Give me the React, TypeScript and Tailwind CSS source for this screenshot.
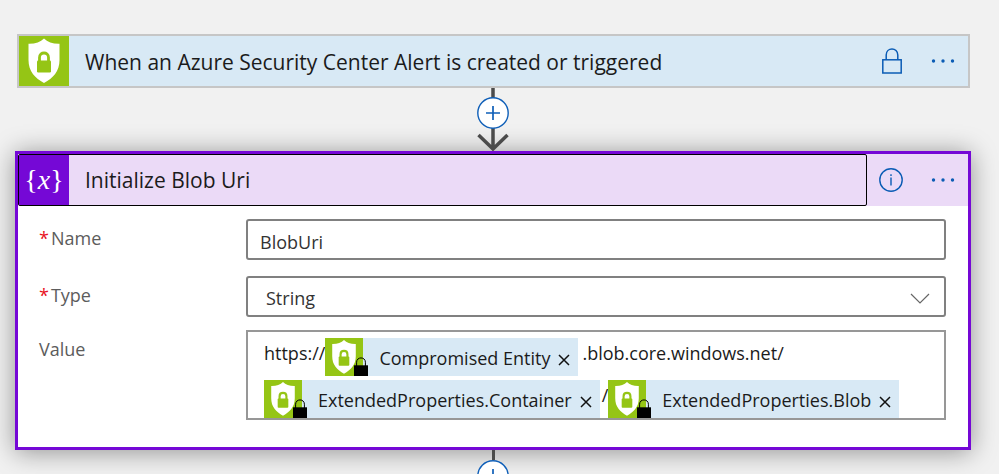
import type { ReactNode } from "react";

function ShieldIcon({ className }: { className: string }) {
  return (
    <svg viewBox="0 0 50 50" className={className} aria-hidden="true">
      <rect width="50" height="50" fill="#95c515" />
      <path
        d="M25 2.500C28.500 6 34 8 40.500 7.800V24C40.500 35.500 34 42 25 47C16 42 9.500 35.500 9.500 24V7.800C16 8 21.500 6 25 2.500Z"
        fill="#fff"
      />
      <path
        d="M20.500 26V21.500C20.500 15.500 29.500 15.500 29.500 21.500V26"
        fill="none"
        stroke="#95c515"
        strokeWidth="2.800"
      />
      <rect x="18" y="24.500" width="14" height="12" rx="1.200" fill="#95c515" />
    </svg>
  );
}

function SmallLock() {
  return (
    <svg viewBox="0 0 14 19" className="absolute bottom-0 left-[29px] h-[19px] w-[14px]" aria-hidden="true">
      <path d="M2.600 9V5.200C2.600-.5 11.400-.5 11.400 5.200V9" fill="none" stroke="#000" strokeWidth="1" />
      <rect y="8.300" width="14" height="10.700" fill="#000" />
    </svg>
  );
}

function MoreButton() {
  return (
    <button type="button" aria-label="More commands" className="grid h-10 w-[50px] shrink-0 place-items-center text-[#0b5cb5]">
      <svg viewBox="0 0 24 4" className="h-1 w-6" fill="currentColor" aria-hidden="true">
        <circle cx="2.500" cy="2" r="1.700" />
        <circle cx="12" cy="2" r="1.700" />
        <circle cx="21.500" cy="2" r="1.700" />
      </svg>
    </button>
  );
}

function AddStep() {
  return (
    <button type="button" aria-label="Insert a new step" className="relative block h-8 w-8">
      <svg viewBox="0 0 32 32" className="h-8 w-8" fill="none" stroke="#0f5fb8" aria-hidden="true">
        <circle cx="16" cy="16" r="15.200" fill="#fff" strokeWidth="1.400" />
        <path d="M16 9V23M9 16H23" strokeWidth="1.700" />
      </svg>
    </button>
  );
}

function Token({ label }: { label: string }) {
  return (
    <span className="relative flex h-[38px] items-center bg-[#d8e9f5]" contentEditable={false}>
      <ShieldIcon className="h-[38px] w-[38px] shrink-0" />
      <SmallLock />
      <span className="pt-[2px] pl-4">{label}</span>
      <button type="button" aria-label={`Remove ${label}`} className="px-2 pt-[5px]">
        <svg viewBox="0 0 12 12" className="h-3 w-3" stroke="#111" strokeWidth="1.500" aria-hidden="true">
          <path d="M1 1L11 11M11 1L1 11" />
        </svg>
      </button>
    </span>
  );
}

function FieldLabel({ id, htmlFor, required, children }: { id?: string; htmlFor?: string; required?: boolean; children: ReactNode }) {
  return (
    <label id={id} htmlFor={htmlFor} className="w-[207px] shrink-0 pt-[5px] text-[#5c5c5c]">
      {required && <span className="mr-[2px] text-[#e81123]">*</span>}
      {children}
    </label>
  );
}

export default function App() {
  return (
    <main className="h-screen overflow-hidden bg-[#f1f1f1] pt-[34px] pr-7 pl-[15px] font-['Open_Sans','Noto_Sans',sans-serif] text-[18px] leading-7 text-[#1b1b1b]">
      <section className="mr-px ml-[2px] flex items-center border-2 border-[#c6c6c6] bg-[#d8e9f5]">
        <ShieldIcon className="h-[50px] w-[50px] shrink-0" />
        <h2 className="min-w-0 flex-1 truncate pt-px pl-4 text-[21px]">
          When an Azure Security Center Alert is created or triggered
        </h2>
        <svg viewBox="0 0 20 26" className="h-[26px] w-5 shrink-0" fill="none" stroke="#0b5cb5" strokeWidth="1.500" aria-label="Locked">
          <rect x=".8" y="11.800" width="18.400" height="13.200" />
          <path d="M4.200 11.800V7C4.200-1 15.800-1 15.800 7V11.800" />
        </svg>
        <div className="w-4" />
        <MoreButton />
      </section>

      <div className="relative z-10 flex h-[63px] flex-col items-center">
        <svg viewBox="0 0 32 63" className="absolute h-[63px] w-8" fill="none" stroke="#4b4b4b" strokeWidth="3.500" aria-hidden="true">
          <path d="M16 0V60M1.500 47L16 61L30.500 47" />
        </svg>
        <div className="pt-[9px]">
          <AddStep />
        </div>
      </div>

      <section className="border-3 border-[#7508d6] bg-white shadow-[0_2px_24px_rgba(0,0,0,0.4)]">
        <header className="flex items-center bg-[#ebdaf7]">
          <button
            type="button"
            className="flex min-w-0 flex-1 items-center rounded-[2px] border border-black text-left text-[21px]"
          >
            <span className="grid h-[50px] w-[50px] shrink-0 place-items-center bg-[#7508d6] font-['Liberation_Serif',serif] text-[28px] text-white">
              <span className="flex items-center">
                {"{"}
                <i>x</i>
                {"}"}
              </span>
            </span>
            <span className="truncate pl-4">Initialize Blob Uri</span>
          </button>
          <button type="button" aria-label="Information" className="grid h-10 w-12 shrink-0 place-items-center">
            <svg viewBox="0 0 24 24" className="h-6 w-6" fill="none" stroke="#0b5cb5" strokeWidth="1.400" aria-hidden="true">
              <circle cx="12" cy="12" r="11.200" />
              <path d="M12 9.500V17.500M12 6.200V8" />
            </svg>
          </button>
          <div className="w-[3px]" />
          <MoreButton />
        </header>

        <form className="flex flex-col pt-[13px] pr-[22px] pb-[27px] pl-[21px]">
          <div className="flex">
            <FieldLabel htmlFor="name" required>
              Name
            </FieldLabel>
            <input
              id="name"
              defaultValue="BlobUri"
              className="h-[41px] min-w-0 flex-1 rounded-[3px] border-2 border-[#808080] bg-white px-3 pt-1 text-[#333]"
            />
          </div>

          <div className="mt-4 flex">
            <FieldLabel htmlFor="type" required>
              Type
            </FieldLabel>
            <div className="relative flex min-w-0 flex-1">
              <select
                id="type"
                className="h-[41px] w-full appearance-none rounded-[3px] border-2 border-[#808080] bg-white px-[18px] pt-[2px] text-[#333]"
              >
                <option>String</option>
              </select>
              <svg
                viewBox="0 0 20 11"
                className="pointer-events-none absolute top-[17px] right-4 h-[11px] w-5"
                fill="none"
                stroke="#666"
                strokeWidth="1.200"
                aria-hidden="true"
              >
                <path d="M1 1L10 10L19 1" />
              </svg>
            </div>
          </div>

          <div className="mt-[13px] flex">
            <FieldLabel id="value-label">Value</FieldLabel>
            <div
              role="textbox"
              aria-labelledby="value-label"
              contentEditable
              suppressContentEditableWarning
              className="flex min-w-0 flex-1 flex-col gap-1 border-2 border-[#979797] pt-[6px] pl-4"
            >
              <div className="flex">
                <span className="pt-px">https://</span>
                <Token label="Compromised Entity" />
                <span className="pt-px pl-1">.blob.core.windows.net/</span>
              </div>
              <div className="flex">
                <Token label="ExtendedProperties.Container" />
                <span className="pt-px pl-[2px]">/</span>
                <Token label="ExtendedProperties.Blob" />
              </div>
            </div>
          </div>
        </form>
      </section>

      <div className="relative flex flex-col items-center">
        <div className="h-[10px] w-[3px] bg-[#4b4b4b]" />
        <AddStep />
      </div>
    </main>
  );
}
